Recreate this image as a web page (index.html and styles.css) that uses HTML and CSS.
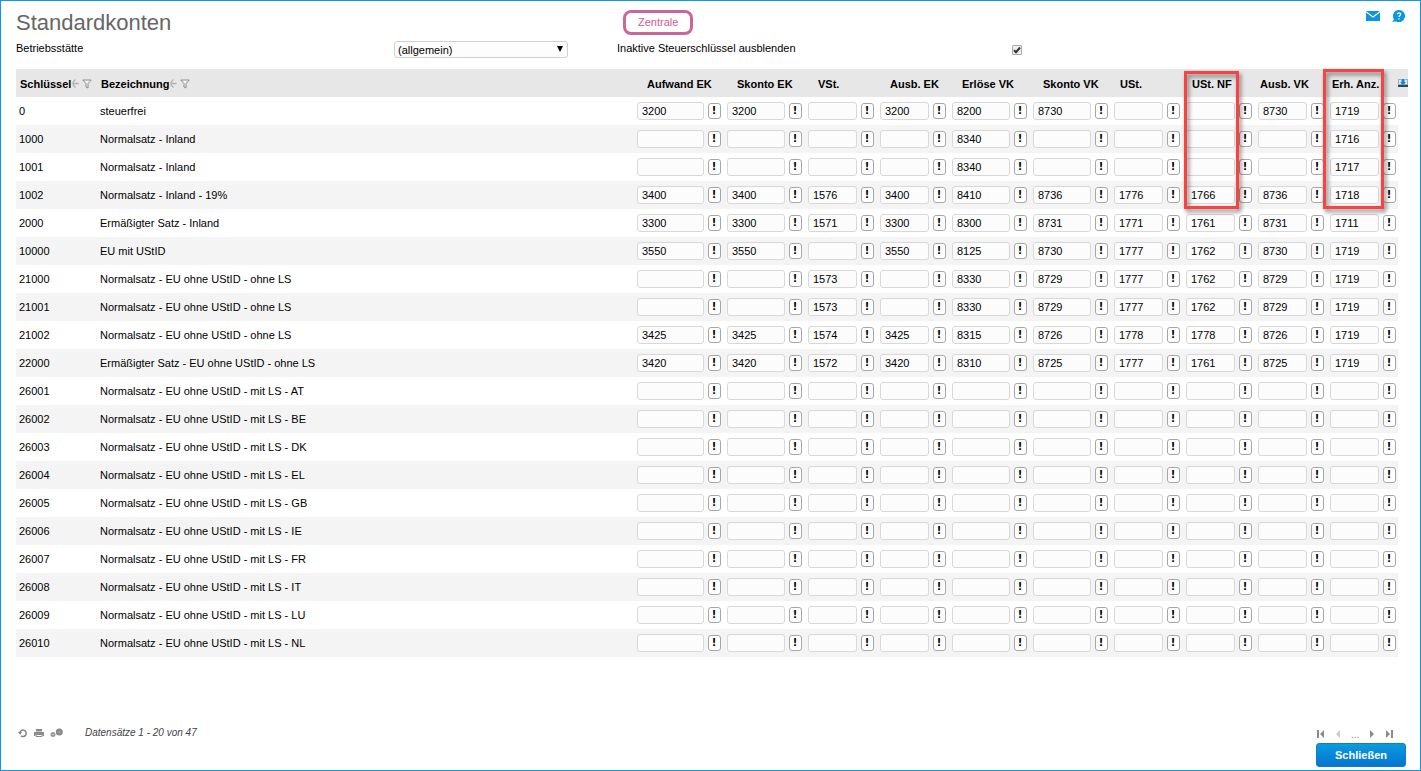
FILE: index.html
```html
<!DOCTYPE html>
<html lang="de">
<head>
  <meta charset="UTF-8">
  <meta name="viewport" content="width=device-width, initial-scale=1">
  <title>Standardkonten</title>
  <link rel="stylesheet" href="styles.css">
</head>
<body>
<div class="page">

  <!-- Kopfzeile -->
  <header class="page-header">
    <h1 class="page-title">Standardkonten</h1>
    <span class="location-badge">Zentrale</span>
    <nav class="header-links">
      <a href="#" aria-label="Nachricht">
        <svg width="14" height="10" viewBox="0 0 14 10"><path fill="#0a97dc" d="M0 0h14L7 5.2zM0 1.6l7 5.1 7-5.1V10H0z"/></svg>
      </a>
      <a href="#" aria-label="Hilfe">
        <svg width="13" height="12" viewBox="0 0 13 12"><path fill="#0a97dc" d="M7 0a6 6 0 1 1-2.6 11.4L0 11.8l2-2.4A6 6 0 0 1 7 0z"/><path fill="none" stroke="#fff" stroke-width="1.2" d="M5.400 4.300c0-2 3.400-1.900 3.300 0C8.700 5.500 7 5.500 7 7M7 8.200v1.300"/></svg>
      </a>
    </nav>
  </header>

  <!-- Filter -->
  <form class="filter-bar">
    <label for="site">Betriebsstätte</label>
    <div class="select-box">
      <select id="site">
        <option>(allgemein)</option>
      </select>
    </div>
    <label for="hide-inactive">Inaktive Steuerschlüssel ausblenden</label>
    <div class="check-box">
      <input type="checkbox" id="hide-inactive" checked>
      <svg class="check-mark" width="10" height="10" viewBox="0 0 10 10"><path fill="none" stroke="#333" stroke-width="2" d="M2 5.200l2 2L8 2.500"/></svg>
    </div>
  </form>

  <!-- Kontentabelle -->
  <table class="accounts">
    <colgroup>
      <col class="col-key"><col>
      <col class="col-wide"><col class="col-medium"><col class="col-small"><col class="col-small">
      <col class="col-medium"><col class="col-medium"><col class="col-small"><col class="col-small">
      <col class="col-small"><col class="col-last"><col class="col-tool">
    </colgroup>
    <thead>
      <tr>
        <th class="text-head"><span class="head-label">Schlüssel
          <svg width="8" height="10" viewBox="0 0 8 10"><path fill="none" stroke="#b0b0b0" stroke-width="1.300" d="M4.500.5C1 3 1 6 4.500 8.500M2 4.500h5.500"/></svg>
          <svg class="funnel" width="10" height="10" viewBox="0 0 10 10"><path fill="#f5f5f5" stroke="#8c8c8c" d="M.8 1h8.400L6 4.500V9L4 8V4.500z"/></svg></span></th>
        <th class="text-head"><span class="head-label">Bezeichnung
          <svg width="8" height="10" viewBox="0 0 8 10"><path fill="none" stroke="#b0b0b0" stroke-width="1.300" d="M4.500.5C1 3 1 6 4.500 8.500M2 4.500h5.500"/></svg>
          <svg class="funnel" width="10" height="10" viewBox="0 0 10 10"><path fill="#f5f5f5" stroke="#8c8c8c" d="M.8 1h8.400L6 4.500V9L4 8V4.500z"/></svg></span></th>
        <th>Aufwand EK</th>
        <th>Skonto EK</th>
        <th>VSt.</th>
        <th>Ausb. EK</th>
        <th>Erlöse VK</th>
        <th>Skonto VK</th>
        <th class="head-mid">USt.</th>
        <th class="head-mid marked">USt. NF<span class="marker marker-nf"></span></th>
        <th class="head-near">Ausb. VK</th>
        <th class="head-near marked">Erh. Anz.<span class="marker marker-anz"></span></th>
        <th class="tool-head">
          <svg width="10" height="9" viewBox="0 0 10 9"><path fill="#8fb0cd" d="M0 0h10v6H0z"/><path fill="#d9ecfa" d="M1 1h2v4H1zM7 1h2v4H7z"/><path fill="#1687d2" d="M4 0h2v3h2L5 6 2 3h2z"/><path fill="#39444f" d="M0 6h10v2H0z"/></svg>
        </th>
      </tr>
    </thead>
    <tbody id="account-rows"></tbody>
  </table>

  <!-- Fußzeile -->
  <footer class="page-footer">
    <div class="list-tools">
      <a href="#" aria-label="Aktualisieren"><svg width="10" height="10" viewBox="0 0 10 10"><path fill="none" stroke="#858585" stroke-width="1.500" d="M2 4.200A3.200 3.200 0 1 1 3 7.800"/><path fill="#858585" d="M0 4h4.200L2.100 6.700z"/></svg></a>
      <a href="#" aria-label="Drucken"><svg width="10" height="10" viewBox="0 0 10 10"><path fill="#8a8a8a" d="M2 1h6v2.500H2zM0 4h10v4H8.500V6.500h-7V8H0z"/><path fill="none" stroke="#8a8a8a" d="M2 6.500h6v2H2z"/></svg></a>
      <a href="#" aria-label="Einstellungen"><svg width="13" height="10" viewBox="0 0 13 10"><circle cx="3" cy="6.500" r="2.500" fill="#9a9a9a"/><circle cx="9.300" cy="4" r="3.500" fill="#8a8a8a"/><circle cx="9.300" cy="4" r="1" fill="#aaa"/><circle cx="3" cy="6.500" r=".8" fill="#ccc"/></svg></a>
      <span class="record-info">Datensätze 1 - 20 von 47</span>
    </div>
    <div class="footer-actions">
      <nav class="pager">
        <a href="#" aria-label="Erste Seite"><svg width="8" height="8" viewBox="0 0 8 8"><path fill="#8a8a8a" d="M0 0h2v8H0zM7 0v8L3 4z"/></svg></a>
        <a href="#" aria-label="Vorherige Seite"><svg width="8" height="8" viewBox="0 0 8 8"><path fill="#ccc" d="M6 0v8L2 4z"/></svg></a>
        <span class="dots">...</span>
        <a href="#" aria-label="Nächste Seite"><svg width="8" height="8" viewBox="0 0 8 8"><path fill="#8a8a8a" d="M2 0v8l4-4z"/></svg></a>
        <a href="#" aria-label="Letzte Seite"><svg width="8" height="8" viewBox="0 0 8 8"><path fill="#8a8a8a" d="M6 0h2v8H6zM1 0v8l4-4z"/></svg></a>
      </nav>
      <button type="button" class="close-button">Schließen</button>
    </div>
  </footer>

</div>
<script src="script.js"></script>
</body>
</html>
```

FILE: styles.css
```css
* {
  box-sizing: border-box;
}

body {
  margin: 0;
  font-family: Arial, "Liberation Sans", sans-serif;
  font-size: 11px;
  color: #000;
  background: #fff;
}

svg {
  display: block;
  flex-shrink: 0;
}

.page {
  display: flex;
  flex-direction: column;
  min-height: 100vh;
  padding: 9px 12px 3px 15px;
  border: 1px solid #0a9be0;
}

/* Kopfzeile */
.page-header {
  display: grid;
  grid-template-columns: 607px 1fr auto;
  align-items: start;
}

.page-title {
  margin: 0;
  font-size: 22px;
  line-height: 26px;
  font-weight: normal;
  color: #666;
}

.location-badge {
  justify-self: start;
  padding: 0 12px;
  border: 3px solid #cc6699;
  border-radius: 8px;
  line-height: 19px;
  color: #cc5c99;
}

.header-links {
  display: flex;
  align-items: center;
  gap: 12px;
  padding-right: 3px;
}

/* Filter */
.filter-bar {
  display: grid;
  grid-template-columns: 378px 223px 395px 1fr;
  align-items: center;
  height: 17px;
  margin: 5px 0 11px;
}

.filter-bar label {
  line-height: 15px;
  padding-bottom: 2px;
}

.select-box {
  position: relative;
  width: 174px;
}

.select-box select {
  display: block;
  width: 100%;
  height: 17px;
  padding: 0 3px;
  border: 1px solid #d0d0d0;
  border-radius: 3px;
  appearance: none;
  background: #fdfdfd;
  font: inherit;
  color: #000;
}

.select-box::after {
  content: "";
  position: absolute;
  top: 5px;
  right: 5px;
  border: 3px solid transparent;
  border-top: 6px solid #000;
  border-bottom: 0;
  pointer-events: none;
}

.check-box {
  position: relative;
  width: 10px;
  height: 10px;
}

.check-box input {
  display: block;
  width: 10px;
  height: 10px;
  margin: 0;
  border: 1px solid #aaa;
  border-radius: 1px;
  appearance: none;
  background: #eee;
}

.check-mark {
  position: absolute;
  top: 0;
  left: 0;
  visibility: hidden;
  pointer-events: none;
}

.check-box input:checked + .check-mark {
  visibility: visible;
}

/* Kontentabelle */
.accounts {
  width: 100%;
  table-layout: fixed;
  border-collapse: collapse;
}

.col-key { width: 81px; }
.col-wide { width: 90px; }
.col-medium { width: 81px; }
.col-small { width: 72px; }
.col-last { width: 68px; }
.col-tool { width: 10px; }

.accounts th {
  height: 28px;
  padding: 2px 0 0 10px;
  background: #e7e7e7;
  text-align: left;
  white-space: nowrap;
}

.accounts .text-head {
  padding-left: 4px;
}

.accounts .head-mid {
  padding-left: 6px;
}

.accounts .head-near {
  padding-left: 2px;
}

.accounts .tool-head {
  padding: 0;
}

.head-label {
  display: flex;
  align-items: center;
}

.funnel {
  margin-left: 3px;
}

.accounts td {
  height: 28px;
  padding: 0;
}

.accounts .text-cell {
  padding-left: 3px;
}

.accounts tbody tr:nth-child(even) td {
  background: #f4f4f4;
}

.account {
  display: flex;
  align-items: center;
  gap: 4px;
  padding-right: 6px;
}

.last .account {
  padding-right: 2px;
}

.account input {
  flex: 1;
  min-width: 0;
  height: 18px;
  padding: 0 4px;
  border: 1px solid #d8d8d8;
  border-radius: 3px;
  background: #fcfcfc;
  font: inherit;
  color: #000;
}

.account button {
  width: 13px;
  height: 16px;
  padding: 0 1px 0 0;
  border: 1px solid #a6a6a6;
  border-radius: 3px;
  background: #fff;
  font: bold 10px/14px "DejaVu Sans", sans-serif;
  color: #000;
}

/* Rote Markierungen über den Spalten */
.marked {
  position: relative;
}

.marker {
  position: absolute;
  z-index: 1;
  border: 3px solid #f94242;
  filter: drop-shadow(2px 3px 2px rgba(0, 0, 0, 0.5));
  pointer-events: none;
}

.marker-nf {
  top: 2px;
  left: -2px;
  width: 55px;
  height: 138px;
}

.marker-anz {
  top: 0;
  left: -7px;
  width: 61px;
  height: 140px;
}

/* Fußzeile */
.page-footer {
  display: flex;
  justify-content: space-between;
  align-items: flex-start;
  margin-top: auto;
}

.list-tools {
  display: flex;
  align-items: center;
  gap: 6px;
  padding-left: 2px;
}

.record-info {
  padding-left: 16px;
  font-size: 10px;
  line-height: 12px;
  font-style: italic;
  color: #444;
}

.footer-actions {
  padding-right: 2px;
}

.pager {
  display: flex;
  align-items: center;
  gap: 9px;
  height: 16px;
  padding: 0 0 2px 1px;
  color: #888;
}

.dots {
  font-size: 10px;
}

.close-button {
  display: block;
  width: 90px;
  height: 24px;
  padding: 0;
  border: 1px solid #0a80cc;
  border-radius: 3px;
  background: linear-gradient(#0a9be0, #0674d0);
  font: bold 11px Arial, "Liberation Sans", sans-serif;
  color: #fff;
}
```

FILE: script.js
```js
// Spalten mit Konten, in der Reihenfolge des Tabellenkopfs
const columns = ["Aufwand EK", "Skonto EK", "VSt.", "Ausb. EK", "Erlöse VK", "Skonto VK", "USt.", "USt. NF", "Ausb. VK", "Erh. Anz."];

const rows = [
  ["0", "steuerfrei", "3200", "3200", "", "3200", "8200", "8730", "", "", "8730", "1719"],
  ["1000", "Normalsatz - Inland", "", "", "", "", "8340", "", "", "", "", "1716"],
  ["1001", "Normalsatz - Inland", "", "", "", "", "8340", "", "", "", "", "1717"],
  ["1002", "Normalsatz - Inland - 19%", "3400", "3400", "1576", "3400", "8410", "8736", "1776", "1766", "8736", "1718"],
  ["2000", "Ermäßigter Satz - Inland", "3300", "3300", "1571", "3300", "8300", "8731", "1771", "1761", "8731", "1711"],
  ["10000", "EU mit UStID", "3550", "3550", "", "3550", "8125", "8730", "1777", "1762", "8730", "1719"],
  ["21000", "Normalsatz - EU ohne UStID - ohne LS", "", "", "1573", "", "8330", "8729", "1777", "1762", "8729", "1719"],
  ["21001", "Normalsatz - EU ohne UStID - ohne LS", "", "", "1573", "", "8330", "8729", "1777", "1762", "8729", "1719"],
  ["21002", "Normalsatz - EU ohne UStID - ohne LS", "3425", "3425", "1574", "3425", "8315", "8726", "1778", "1778", "8726", "1719"],
  ["22000", "Ermäßigter Satz - EU ohne UStID - ohne LS", "3420", "3420", "1572", "3420", "8310", "8725", "1777", "1761", "8725", "1719"]
];

// Lieferschwelle überschritten: noch ohne Konten
["AT", "BE", "DK", "EL", "GB", "IE", "FR", "IT", "LU", "NL"].forEach((country, i) => {
  rows.push([String(26001 + i), "Normalsatz - EU ohne UStID - mit LS - " + country]);
});

const body = document.getElementById("account-rows");

rows.forEach(([key, name, ...accounts]) => {
  const tr = document.createElement("tr");

  [key, name].forEach(text => {
    const td = document.createElement("td");
    td.className = "text-cell";
    td.textContent = text;
    tr.appendChild(td);
  });

  columns.forEach((column, i) => {
    const td = document.createElement("td");
    if (i === columns.length - 1) td.className = "last";

    const box = document.createElement("div");
    box.className = "account";

    const input = document.createElement("input");
    input.type = "text";
    input.value = accounts[i] || "";
    input.setAttribute("aria-label", column + " " + key);

    const button = document.createElement("button");
    button.type = "button";
    button.textContent = "!";

    box.append(input, button);
    td.appendChild(box);
    tr.appendChild(td);
  });

  body.appendChild(tr);
});
```
